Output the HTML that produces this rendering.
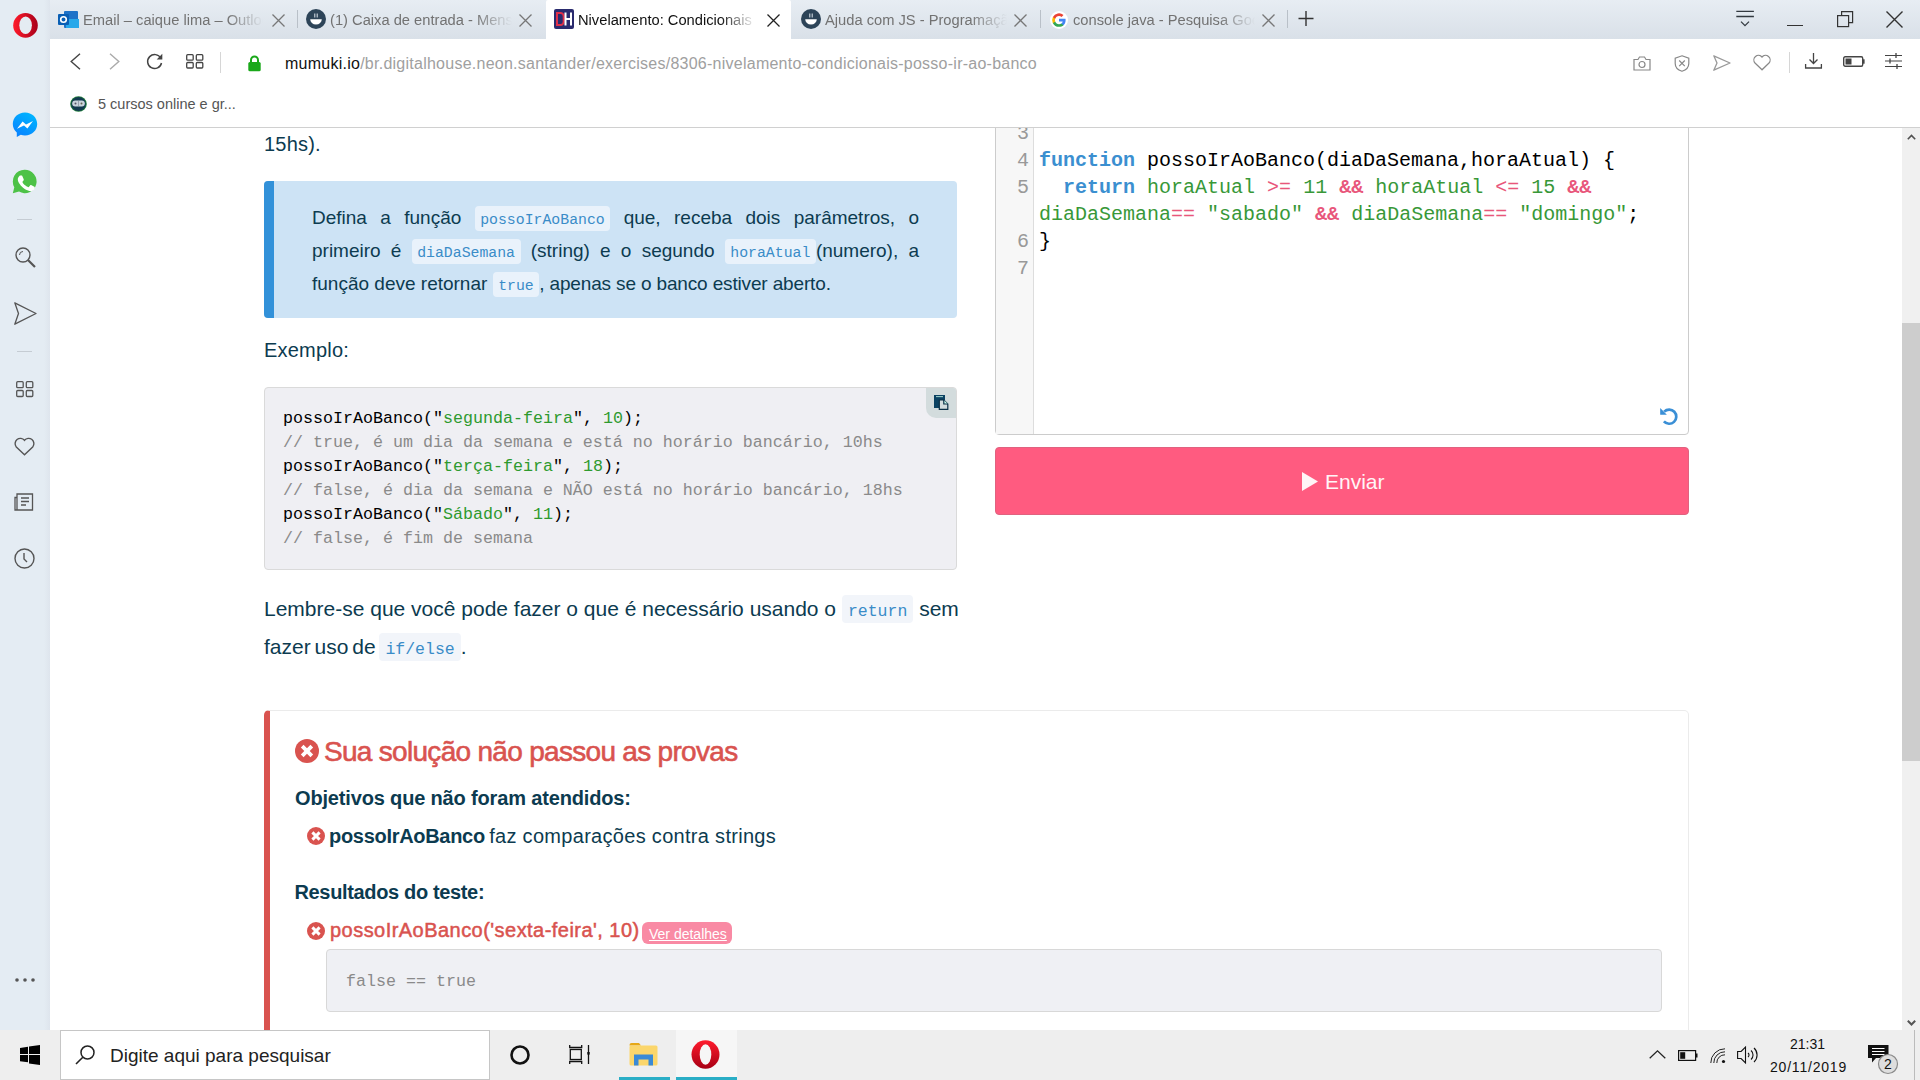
<!DOCTYPE html>
<html><head><meta charset="utf-8">
<style>
*{margin:0;padding:0;box-sizing:border-box}
html,body{width:1920px;height:1080px;overflow:hidden;background:#fff;font-family:"Liberation Sans",sans-serif}
.a{position:absolute}
.nw{white-space:nowrap}
svg{position:absolute;overflow:visible}
#tabstrip{left:0;top:0;width:1920px;height:39px;background:linear-gradient(#e7edf3,#d9e0e8)}
#sidebar{left:0;top:0;width:50px;height:1030px;background:linear-gradient(to right,#e4ecf3 88%,#dee5ed)}
#chrome{left:50px;top:39px;width:1870px;height:89px;background:#fff;border-bottom:1px solid #d0d0d0;border-top-left-radius:4px}
#page{left:0;top:0;width:1902px;height:1030px;clip-path:inset(128px 0 0 50px)}
#scroll{left:1902px;top:128px;width:18px;height:902px;background:#f0f0f0}
#taskbar{left:0;top:1030px;width:1920px;height:50px;background:#eeeeee}
.tabt{position:absolute;top:11.5px;font-size:14.7px;line-height:17px;color:#727272;white-space:nowrap;overflow:hidden;-webkit-mask-image:linear-gradient(to right,#000 80%,transparent)}
.tc{color:#777}
.txt{color:#0c3b50;white-space:nowrap}
.ic{display:inline-block;font-family:"Liberation Mono",monospace;color:#3a8cc8;background:#e9f2fb;border-radius:4px;vertical-align:baseline}
.codeblk{left:264px;top:387px;width:693px;height:183px;background:#efeff3;border:1px solid #dadada;border-radius:4px}
.cl{position:absolute;left:283px;font-family:"Liberation Mono",monospace;font-size:16.67px;line-height:20px;color:#000;white-space:pre}
.cm{color:#8a8a8a}.gs{color:#2e9a2e}
.editor{left:995px;top:100px;width:694px;height:335px;border:1px solid #cccccc;border-radius:4px;background:#fff}
.gutter{position:absolute;left:996px;top:128px;width:38px;height:306px;background:#f7f7f7;border-right:1px solid #dddddd}
.ln{position:absolute;left:996px;width:33px;text-align:right;font-family:"Liberation Mono",monospace;font-size:20px;line-height:23px;color:#999}
.el{position:absolute;left:1039px;font-family:"Liberation Mono",monospace;font-size:20px;line-height:23px;color:#000;white-space:pre}
.kw{color:#3b8fd0;font-weight:bold}.gr{color:#389838}.op{color:#e8567b}.opb{color:#e8567b;font-weight:bold}
.btn{left:995px;top:447px;width:694px;height:68px;background:#ff5b80;border:1px solid #e0627f;border-radius:4px}
.errbox{left:264px;top:710px;width:1425px;height:400px;border:1px solid #ebebeb;border-left:6px solid #d9534f;border-radius:5px}
</style></head>
<body>
<!-- ===== TAB STRIP ===== -->
<div id="tabstrip" class="a"></div>
<div class="a" style="left:546px;top:0;width:245px;height:39px;background:#fff;border-radius:2px 2px 0 0"></div>
<!-- tab1 outlook -->
<svg style="left:58px;top:10px" width="22" height="19" viewBox="0 0 22 19">
  <rect x="6" y="1" width="14" height="17" rx="1" fill="#1e72c8"/>
  <rect x="8" y="9" width="13" height="9" fill="#28a8ea"/>
  <rect x="0" y="4" width="11" height="11" rx="1" fill="#0a5fb4"/>
  <circle cx="5.5" cy="9.5" r="2.8" fill="none" stroke="#fff" stroke-width="1.6"/>
</svg>
<div class="tabt" style="left:83px;width:180px">Email – caique lima – Outlook</div>
<svg style="left:272px;top:14px" width="13" height="13"><path d="M0.5 0.5L12.5 12.5M12.5 0.5L0.5 12.5" stroke="#777" stroke-width="1.3"/></svg>
<div class="a" style="left:297px;top:10px;width:1px;height:18px;background:#b9c0c8"></div>
<!-- tab2 -->
<svg style="left:306px;top:9px" width="20" height="20" viewBox="0 0 20 20"><circle cx="10" cy="10" r="10" fill="#2d4458"/><path d="M4.2 10.2h11.6a5.8 5.2 0 0 1-11.6 0z" fill="#fff"/><path d="M8.8 4.5v4M11.2 4.5v4" stroke="#dfe6ee" stroke-width="1"/></svg>
<div class="tabt" style="left:330px;width:182px">(1) Caixa de entrada - Mensagens</div>
<svg style="left:519px;top:14px" width="13" height="13"><path d="M0.5 0.5L12.5 12.5M12.5 0.5L0.5 12.5" stroke="#777" stroke-width="1.3"/></svg>
<!-- tab3 active -->
<svg style="left:554px;top:9px" width="20" height="20" viewBox="0 0 20 20"><rect width="20" height="20" rx="2" fill="#2a2b6e"/><path d="M3 4h3.5a3.2 3.2 0 0 1 3.2 3.2v5.6a3.2 3.2 0 0 1-3.2 3.2H3z" fill="none" stroke="#e0304a" stroke-width="2"/><path d="M11.5 3.5v13M17 3.5v13M11.5 10H17" stroke="#fff" stroke-width="2"/></svg>
<div class="tabt" style="left:578px;width:178px;color:#111">Nivelamento: Condicionais</div>
<svg style="left:767px;top:14px" width="13" height="13"><path d="M0.5 0.5L12.5 12.5M12.5 0.5L0.5 12.5" stroke="#222" stroke-width="1.3"/></svg>
<!-- tab4 -->
<svg style="left:801px;top:9px" width="20" height="20" viewBox="0 0 20 20"><circle cx="10" cy="10" r="10" fill="#2d4458"/><path d="M4.2 10.2h11.6a5.8 5.2 0 0 1-11.6 0z" fill="#fff"/><path d="M8.8 4.5v4M11.2 4.5v4" stroke="#dfe6ee" stroke-width="1"/></svg>
<div class="tabt" style="left:825px;width:182px">Ajuda com JS - Programação</div>
<svg style="left:1014px;top:14px" width="13" height="13"><path d="M0.5 0.5L12.5 12.5M12.5 0.5L0.5 12.5" stroke="#777" stroke-width="1.3"/></svg>
<div class="a" style="left:1040px;top:10px;width:1px;height:18px;background:#b9c0c8"></div>
<!-- tab5 google -->
<svg style="left:1050px;top:11px" width="18" height="18" viewBox="0 0 18 18"><circle cx="9" cy="9" r="9" fill="#fff"/>
 <path d="M15.6 9.2c0-.5 0-1-.1-1.4H9v2.7h3.7a3.2 3.2 0 0 1-1.4 2.1v1.7h2.2c1.3-1.2 2.1-3 2.1-5.1z" fill="#4285f4"/>
 <path d="M9 15.8c1.8 0 3.4-.6 4.5-1.6l-2.2-1.7c-.6.4-1.4.7-2.3.7-1.8 0-3.3-1.2-3.8-2.8H2.9v1.8A6.8 6.8 0 0 0 9 15.8z" fill="#34a853"/>
 <path d="M5.2 10.4a4 4 0 0 1 0-2.6V6H2.9a6.8 6.8 0 0 0 0 6.2z" fill="#fbbc05"/>
 <path d="M9 4.9c1 0 1.9.3 2.6 1l1.9-1.9A6.8 6.8 0 0 0 2.9 6l2.3 1.8C5.7 6.1 7.2 4.9 9 4.9z" fill="#ea4335"/></svg>
<div class="tabt" style="left:1073px;width:182px">console java - Pesquisa Google</div>
<svg style="left:1262px;top:14px" width="13" height="13"><path d="M0.5 0.5L12.5 12.5M12.5 0.5L0.5 12.5" stroke="#777" stroke-width="1.3"/></svg>
<div class="a" style="left:1287px;top:10px;width:1px;height:18px;background:#b9c0c8"></div>
<svg style="left:1298px;top:11px" width="16" height="16"><path d="M8 0v15M0.5 7.5h15" stroke="#333" stroke-width="1.4"/></svg>
<!-- window controls -->
<svg style="left:1736px;top:10px" width="19" height="17"><path d="M0.3 1.4h17.6M0.3 6.5h17.6" stroke="#333a40" stroke-width="1.3"/><path d="M5 11.6l4 4 4-4" fill="none" stroke="#333a40" stroke-width="1.3"/></svg>
<div class="a" style="left:1787px;top:25px;width:16px;height:1.3px;background:#333"></div>
<svg style="left:1837px;top:11px" width="17" height="16"><rect x="0.6" y="4.6" width="11" height="11" fill="none" stroke="#333" stroke-width="1.2"/><path d="M4.6 4.6V0.6h11v11h-4" fill="none" stroke="#333" stroke-width="1.2"/></svg>
<svg style="left:1886px;top:11px" width="17" height="17"><path d="M0.5 0.5L16.5 16.5M16.5 0.5L0.5 16.5" stroke="#333" stroke-width="1.4"/></svg>

<!-- ===== SIDEBAR ===== -->
<div id="sidebar" class="a"></div>
<svg style="left:13px;top:13px" width="25" height="25" viewBox="0 0 25 25"><defs><linearGradient id="ol" x1="0" y1="0" x2="1" y2="0"><stop offset="0" stop-color="#ff1a2a"/><stop offset="1" stop-color="#a8001a"/></linearGradient></defs>
  <ellipse cx="12.5" cy="12.4" rx="12.3" ry="12.3" fill="url(#ol)"/>
  <ellipse cx="12.6" cy="12.3" rx="6.3" ry="8.8" fill="#e4ecf2"/>
</svg>


<!-- sidebar icons -->
<svg style="left:12px;top:112px" width="26" height="26" viewBox="0 0 26 26"><defs><linearGradient id="msg" x1="0" y1="1" x2="0.6" y2="0"><stop offset="0" stop-color="#0a7cff"/><stop offset="1" stop-color="#00b2ff"/></linearGradient></defs><path d="M13 0.5C6 0.5 0.8 5.5 0.8 12c0 3.5 1.5 6.5 4 8.6V25l4-2.2c1.3.4 2.7.6 4.2.6 7 0 12.2-5 12.2-11.4S20 0.5 13 0.5z" fill="url(#msg)"/><path d="M5 16.8L10.6 9.6 14 12.4 21 9 15.4 16.4 12 13.6z" fill="#fff"/></svg>
<svg style="left:12px;top:169px" width="25" height="25" viewBox="0 0 25 25"><path d="M12.5 0.8A11.7 11.7 0 0 0 2.3 18.2L0.8 24.2l6.2-1.6A11.7 11.7 0 1 0 12.5 0.8z" fill="#4dc247"/><path d="M8.6 6.5c-.4 0-1 .1-1.4.7-.5.5-1.4 1.4-1.4 3.4s1.5 4 1.7 4.2c.2.3 2.9 4.6 7.1 6.2 3.5 1.4 4.2 1.1 5 1 .8-.1 2.5-1 2.8-2 .4-1 .4-1.8.3-2-.1-.2-.4-.3-.8-.5l-2.8-1.4c-.4-.1-.7-.2-.9.2-.3.4-1.1 1.4-1.3 1.6-.2.3-.5.3-.9.1-.4-.2-1.7-.6-3.3-2-1.2-1.1-2-2.4-2.2-2.8-.2-.4 0-.6.2-.8l.6-.7c.2-.2.3-.4.4-.7.1-.3 0-.5 0-.7l-1.3-3c-.3-.8-.7-.7-.9-.7z" fill="#fff"/></svg>
<div class="a" style="left:17px;top:219px;width:15px;height:1px;background:#c5ccd3"></div>
<svg style="left:15px;top:247px" width="21" height="21" viewBox="0 0 21 21"><circle cx="8" cy="8" r="7" fill="none" stroke="#555" stroke-width="1.4"/><path d="M13 13l7 7" stroke="#555" stroke-width="2.2"/><path d="M4.5 8a3.5 3.5 0 0 1 3.5-3.5" fill="none" stroke="#555" stroke-width="1"/></svg>
<svg style="left:14px;top:302px" width="23" height="23" viewBox="0 0 23 23"><path d="M0.8 0.8L22 11.5 0.8 22.2 4.5 11.5z" fill="none" stroke="#555" stroke-width="1.3" stroke-linejoin="round"/></svg>
<div class="a" style="left:17px;top:351px;width:15px;height:1px;background:#c5ccd3"></div>
<svg style="left:16px;top:381px" width="18" height="17"><rect x="0.7" y="0.7" width="6.5" height="6" rx="1" fill="none" stroke="#555" stroke-width="1.3"/><rect x="10.3" y="0.7" width="6.5" height="6" rx="1" fill="none" stroke="#555" stroke-width="1.3"/><rect x="0.7" y="9.5" width="6.5" height="6" rx="1" fill="none" stroke="#555" stroke-width="1.3"/><rect x="10.3" y="9.5" width="6.5" height="6" rx="1" fill="none" stroke="#555" stroke-width="1.3"/></svg>
<svg style="left:14px;top:437px" width="21" height="19" viewBox="0 0 21 19"><path d="M10.5 17.8L2.3 10A4.9 4.9 0 0 1 10.5 3.3 4.9 4.9 0 0 1 18.7 10z" fill="none" stroke="#555" stroke-width="1.4"/></svg>
<svg style="left:14px;top:493px" width="21" height="18" viewBox="0 0 21 18"><path d="M3 4.5h-2v12.5h17.5V1H3v16" fill="none" stroke="#555" stroke-width="1.3"/><path d="M7 5h8M7 8.5h8M7 12h5" stroke="#555" stroke-width="1.3"/></svg>
<svg style="left:14px;top:548px" width="21" height="21" viewBox="0 0 21 21"><circle cx="10.5" cy="10.5" r="9.5" fill="none" stroke="#555" stroke-width="1.4"/><path d="M10 5v6l3 3" fill="none" stroke="#555" stroke-width="1.4"/></svg>
<svg style="left:15px;top:978px" width="20" height="4"><circle cx="2" cy="2" r="1.8" fill="#555"/><circle cx="10" cy="2" r="1.8" fill="#555"/><circle cx="18" cy="2" r="1.8" fill="#555"/></svg>

<!-- ===== CHROME (address+bookmarks) ===== -->
<div id="chrome" class="a"></div>
<svg style="left:70px;top:53px" width="11" height="17"><path d="M10 0.7L1.2 8.5 10 16.3" fill="none" stroke="#444" stroke-width="1.4"/></svg>
<svg style="left:109px;top:53px" width="11" height="17"><path d="M1 0.7L9.8 8.5 1 16.3" fill="none" stroke="#aaa" stroke-width="1.4"/></svg>
<svg style="left:146px;top:53px" width="18" height="17" viewBox="0 0 18 17"><path d="M14.8 5.2A7 7 0 1 0 15.5 10" fill="none" stroke="#444" stroke-width="1.5"/><path d="M16.3 0.8v5.6h-5.6z" fill="#444"/></svg>
<svg style="left:186px;top:54px" width="18" height="15"><rect x="0.7" y="0.7" width="6.5" height="5.5" rx="1" fill="none" stroke="#444" stroke-width="1.3"/><rect x="10.3" y="0.7" width="6.5" height="5.5" rx="1" fill="none" stroke="#444" stroke-width="1.3"/><rect x="0.7" y="8.5" width="6.5" height="5.5" rx="1" fill="none" stroke="#444" stroke-width="1.3"/><rect x="10.3" y="8.5" width="6.5" height="5.5" rx="1" fill="none" stroke="#444" stroke-width="1.3"/></svg>
<div class="a" style="left:220px;top:52px;width:1px;height:21px;background:#d6d6d6"></div>
<svg style="left:247.5px;top:55px" width="13" height="17" viewBox="0 0 13 17"><path d="M3 7.5V5a3.5 3.5 0 0 1 7 0v2.5" fill="none" stroke="#1aa81a" stroke-width="2"/><rect x="0.3" y="7" width="12.4" height="9.3" rx="1.5" fill="#1aa81a"/></svg>
<div class="a nw" style="left:285px;top:54px;font-size:16px;line-height:19px;color:#111;letter-spacing:0.25px">mumuki.io<span style="color:#a0a0a0">/br.digitalhouse.neon.santander/exercises/8306-nivelamento-condicionais-posso-ir-ao-banco</span></div>
<!-- right icons -->
<svg style="left:1633px;top:55px" width="18" height="16" viewBox="0 0 18 16"><path d="M1 4.5h4l1.5-2.5h5L13 4.5h4v10.5H1z" fill="none" stroke="#888" stroke-width="1.2"/><circle cx="9" cy="9.5" r="3" fill="none" stroke="#888" stroke-width="1.2"/></svg>
<svg style="left:1674px;top:55px" width="16" height="17" viewBox="0 0 16 17"><path d="M8 0.8l6.8 2.4v5.3c0 3.8-3 6.6-6.8 7.8C4.2 15.1 1.2 12.3 1.2 8.5V3.2z" fill="none" stroke="#888" stroke-width="1.2"/><path d="M5.2 5.5l5.6 5.6M10.8 5.5l-5.6 5.6" stroke="#888" stroke-width="1.2"/></svg>
<svg style="left:1713px;top:55px" width="18" height="16" viewBox="0 0 18 16"><path d="M0.8 0.8L17 8 0.8 15.2 4 8z" fill="none" stroke="#999" stroke-width="1.3" stroke-linejoin="round"/></svg>
<svg style="left:1753px;top:54px" width="18" height="17" viewBox="0 0 18 17"><path d="M9 15.8L2 9A4.3 4.3 0 0 1 9 3a4.3 4.3 0 0 1 7 6z" fill="none" stroke="#888" stroke-width="1.2"/></svg>
<div class="a" style="left:1789px;top:52px;width:1px;height:21px;background:#d6d6d6"></div>
<svg style="left:1805px;top:53px" width="17" height="16" viewBox="0 0 17 16"><path d="M8.5 0v10M4.5 6.5l4 4 4-4" fill="none" stroke="#444" stroke-width="1.3"/><path d="M0.6 11v4h15.8v-4" fill="none" stroke="#444" stroke-width="1.3"/></svg>
<svg style="left:1843px;top:56px" width="22" height="11" viewBox="0 0 22 11"><rect x="0.7" y="0.7" width="19" height="9.6" rx="1.5" fill="none" stroke="#444" stroke-width="1.4"/><rect x="2.5" y="2.5" width="6" height="6" fill="#444"/><rect x="20" y="3.3" width="1.6" height="4.4" fill="#444"/></svg>
<svg style="left:1885px;top:53px" width="18" height="16" viewBox="0 0 18 16"><path d="M0 2.5h17M0 8h17M0 13.5h17" stroke="#444" stroke-width="1.2"/><path d="M11 0v5M5 5.5v5M12 11v5" stroke="#444" stroke-width="1.3"/></svg>
<!-- bookmark -->
<svg style="left:70px;top:96px" width="17" height="16" viewBox="0 0 17 16"><ellipse cx="8.5" cy="8" rx="8.3" ry="7.8" fill="#1e7a3a"/><ellipse cx="8.5" cy="8" rx="7.3" ry="6.9" fill="#123a4f"/><rect x="2.2" y="4.5" width="12.6" height="6" rx="3" fill="#c9d3dc"/><circle cx="5.5" cy="7.5" r="1" fill="#556"/><circle cx="11.5" cy="7.5" r="1" fill="#665"/><path d="M8.5 5v5" stroke="#8a96a3" stroke-width="0.8"/></svg>
<div class="a nw" style="left:98px;top:95.5px;font-size:14.5px;line-height:17px;color:#555">5 cursos online e gr...</div>

<!-- ===== PAGE ===== -->
<div id="page" class="a">
  <div class="a txt" style="left:264px;top:133px;font-size:20px;line-height:23px;letter-spacing:0.2px">15hs).</div>
  <!-- callout -->
  <div class="a" style="left:264px;top:181px;width:693px;height:137px;background:#cde3f5;border-radius:4px"></div>
  <div class="a" style="left:264px;top:181px;width:10px;height:137px;background:#3291d9;border-radius:4px 0 0 4px"></div>
  <div class="a txt" style="left:312px;top:202.5px;width:607px;font-size:19px;line-height:30px;text-align:justify;text-align-last:justify">Defina a função <span class="ic" style="font-size:14.83px;line-height:22px;height:25px;padding:3px 5.5px 0">possoIrAoBanco</span> que, receba dois parâmetros, o</div>
  <div class="a txt" style="left:312px;top:236px;width:607px;font-size:19px;line-height:30px;text-align:justify;text-align-last:justify">primeiro é <span class="ic" style="font-size:14.83px;line-height:22px;height:25px;padding:3px 5.5px 0">diaDaSemana</span> (string) e o segundo <span class="ic" style="font-size:14.83px;line-height:22px;height:25px;padding:3px 5.5px 0">horaAtual</span>(numero), a</div>
  <div class="a txt" style="left:312px;top:269px;font-size:19px;line-height:30px">função deve retornar <span class="ic" style="font-size:14.83px;line-height:22px;height:25px;padding:3px 5.5px 0">true</span><span style="letter-spacing:-0.15px">, apenas se o banco estiver aberto.</span></div>

  <div class="a txt" style="left:264px;top:339px;font-size:20px;line-height:23px;letter-spacing:0.2px">Exemplo:</div>
  <!-- code block -->
  <div class="a codeblk"></div>
  <div class="a" style="left:926px;top:388px;width:30px;height:30px;background:#d3dcdd;border-radius:0 3px 0 10px"></div>
  <svg style="left:934px;top:395px" width="15" height="15" viewBox="0 0 15 15"><rect x="0" y="0" width="11" height="13" fill="#0b4262"/><rect x="2" y="1.3" width="7" height="0.8" fill="#cfe"/><path d="M5.3 5h4.5l4 4v5.4H5.3z" fill="#d3dcdd" stroke="#0b2f45" stroke-width="1.2"/><path d="M9.8 5v4h4" fill="#cfe" stroke="#0b2f45" stroke-width="1.2"/></svg>
  <div class="cl" style="top:409px">possoIrAoBanco("<span class="gs">segunda-feira</span>", <span class="gs">10</span>);</div>
  <div class="cl cm" style="top:433px">// true, é um dia da semana e está no horário bancário, 10hs</div>
  <div class="cl" style="top:457px">possoIrAoBanco("<span class="gs">terça-feira</span>", <span class="gs">18</span>);</div>
  <div class="cl cm" style="top:481px">// false, é dia da semana e NÃO está no horário bancário, 18hs</div>
  <div class="cl" style="top:505px">possoIrAoBanco("<span class="gs">Sábado</span>", <span class="gs">11</span>);</div>
  <div class="cl cm" style="top:529px">// false, é fim de semana</div>

  <div class="a txt" style="left:264px;top:593px;width:693px;font-size:21px;line-height:32px;text-align:justify;text-align-last:justify">Lembre-se que você pode fazer o que é necessário usando o <span class="ic" style="font-size:16.5px;line-height:22px;height:28px;padding:6px 6px 0;background:#f2f5fa">return</span> sem</div>
  <div class="a txt" style="left:264px;top:630.5px;font-size:21px;line-height:32px;word-spacing:-2px">fazer uso de <span class="ic" style="font-size:16.5px;line-height:22px;height:28px;padding:6px 6px 0;background:#f2f5fa">if/else</span>.</div>

  <!-- editor -->
  <div class="a editor"></div>
  <div class="gutter"></div>
  <div class="ln" style="top:122px">3</div>
  <div class="ln" style="top:149px">4</div>
  <div class="ln" style="top:176px">5</div>
  <div class="ln" style="top:230px">6</div>
  <div class="ln" style="top:257px">7</div>
  <div class="el" style="top:149px"><span class="kw">function</span> possoIrAoBanco(diaDaSemana,horaAtual) {</div>
  <div class="el" style="top:176px">  <span class="kw">return</span> <span class="gr">horaAtual</span> <span class="op">&gt;=</span> <span class="gr">11</span> <span class="opb">&amp;&amp;</span> <span class="gr">horaAtual</span> <span class="op">&lt;=</span> <span class="gr">15</span> <span class="opb">&amp;&amp;</span></div>
  <div class="el" style="top:203px"><span class="gr">diaDaSemana</span><span class="op">==</span> <span class="gr">"sabado"</span> <span class="opb">&amp;&amp;</span> <span class="gr">diaDaSemana</span><span class="op">==</span> <span class="gr">"domingo"</span>;</div>
  <div class="el" style="top:230px">}</div>
  <svg style="left:1655px;top:402px" width="28" height="28" viewBox="0 0 28 28"><path d="M9.2 9.6A7.1 7.1 0 1 1 8.9 19.4" fill="none" stroke="#3a8fd6" stroke-width="2.7"/><path d="M5.2 6L5.2 12.7 11.9 12.7z" fill="#3a8fd6"/></svg>
  <!-- button -->
  <div class="a btn"></div>
  <svg style="left:1302px;top:472px" width="16" height="19"><path d="M0 0L16 9.5 0 19z" fill="#fff5f7"/></svg>
  <div class="a nw" style="left:1325px;top:470px;font-size:21px;line-height:23px;color:#fff5f7">Enviar</div>

  <!-- error box -->
  <div class="a errbox"></div>
  <svg style="left:295px;top:739px" width="24" height="24" viewBox="0 0 24 24"><circle cx="12" cy="12" r="12" fill="#d9534f"/><path d="M7.2 7.2l9.6 9.6M16.8 7.2l-9.6 9.6" stroke="#fff" stroke-width="3.8"/></svg>
  <div class="a nw" style="left:324px;top:736px;font-size:28px;line-height:31px;color:#d9534f;letter-spacing:-0.7px;-webkit-text-stroke:0.6px #d9534f">Sua solução não passou as provas</div>
  <div class="a nw" style="left:295px;top:787px;font-size:20px;line-height:23px;color:#0c3b50;font-weight:bold;letter-spacing:-0.16px">Objetivos que não foram atendidos:</div>
  <svg style="left:307px;top:827px" width="18" height="18" viewBox="0 0 18 18"><circle cx="9" cy="9" r="9" fill="#d9534f"/><path d="M5.4 5.4l7.2 7.2M12.6 5.4l-7.2 7.2" stroke="#fff" stroke-width="2.9"/></svg>
  <div class="a nw" style="left:329px;top:825px;font-size:20px;line-height:23px;color:#0c3b50"><b style="letter-spacing:-0.3px">possoIrAoBanco</b><span style="letter-spacing:0.3px;margin-left:-1.5px"> faz comparações contra strings</span></div>
  <div class="a nw" style="left:294.5px;top:881px;font-size:20px;line-height:23px;color:#0c3b50;font-weight:bold;letter-spacing:-0.35px">Resultados do teste:</div>
  <svg style="left:307px;top:922px" width="18" height="18" viewBox="0 0 18 18"><circle cx="9" cy="9" r="9" fill="#d9534f"/><path d="M5.4 5.4l7.2 7.2M12.6 5.4l-7.2 7.2" stroke="#fff" stroke-width="2.9"/></svg>
  <div class="a nw" style="left:330px;top:919px;font-size:20px;line-height:23px;color:#d9534f;letter-spacing:0.46px;-webkit-text-stroke:0.5px #d9534f">possoIrAoBanco('sexta-feira', 10)</div>
  <div class="a" style="left:642px;top:922px;width:90px;height:22px;background:#f98aa4;border-radius:6px"></div>
  <div class="a nw" style="left:649px;top:926px;font-size:14px;line-height:16px;color:#fff;text-decoration:underline">Ver detalhes</div>
  <div class="a" style="left:326px;top:949px;width:1336px;height:63px;background:#eff0f4;border:1px solid #d8d8d8;border-radius:4px"></div>
  <div class="cl cm" style="left:346px;top:972px">false == true</div>
</div>

<!-- ===== SCROLLBAR ===== -->
<div id="scroll" class="a"></div>
<div class="a" style="left:1902px;top:323px;width:18px;height:438px;background:#cdcdcd"></div>
<svg style="left:1907px;top:134px" width="9" height="6"><path d="M0.8 5.2L4.5 1.5 8.2 5.2" fill="none" stroke="#505050" stroke-width="1.6"/></svg>
<svg style="left:1907px;top:1020px" width="9" height="6"><path d="M0.8 0.8L4.5 4.5 8.2 0.8" fill="none" stroke="#555" stroke-width="2"/></svg>

<!-- ===== TASKBAR ===== -->
<div id="taskbar" class="a"></div>
<!-- taskbar items -->
<svg style="left:20px;top:1045px" width="20" height="20" viewBox="0 0 20 20"><path d="M0 3L8 1.8V9H0zM9 1.6L20 0v9H9zM0 10h8v7.2L0 16.2zM9 10H20v10L9 18.4z" fill="#000"/></svg>
<div class="a" style="left:60px;top:1030px;width:430px;height:50px;background:#fff;border:1px solid #c6c6c6"></div>
<svg style="left:75px;top:1045px" width="20" height="20" viewBox="0 0 20 20"><circle cx="12.5" cy="7.5" r="6.5" fill="none" stroke="#222" stroke-width="1.5"/><path d="M7.8 12.2L1 19" stroke="#222" stroke-width="1.6"/></svg>
<div class="a nw" style="left:110px;top:1045px;font-size:19px;line-height:22px;color:#222">Digite aqui para pesquisar</div>
<svg style="left:510px;top:1045px" width="20" height="20" viewBox="0 0 20 20"><circle cx="10" cy="10" r="8.5" fill="none" stroke="#111" stroke-width="2.6"/></svg>
<svg style="left:569px;top:1045px" width="22" height="19" viewBox="0 0 22 19"><path d="M0.7 0v2.5h12V0M0.7 19v-2.5h12V19" fill="none" stroke="#111" stroke-width="1.3"/><rect x="1.3" y="4.5" width="11" height="10" fill="none" stroke="#111" stroke-width="1.3"/><path d="M19.5 0v19" stroke="#111" stroke-width="1.3"/><rect x="18.3" y="7" width="2.4" height="2.6" fill="#111"/></svg>
<div class="a" style="left:619px;top:1077px;width:51px;height:3px;background:#2aaec6"></div>
<svg style="left:629px;top:1043px" width="29" height="23" viewBox="0 0 29 23"><path d="M0.5 2a2 2 0 0 1 2-2H10l2 2.5h-11.5z" fill="#e6a817"/><rect x="0.5" y="2.5" width="28" height="20" rx="1.5" fill="#fbd66b"/><path d="M5 22.5v-11h19v11h-4.5v-6h-10v6z" fill="#3a8ad6"/></svg>
<div class="a" style="left:676px;top:1030px;width:61px;height:50px;background:#f6f6f6"></div>
<div class="a" style="left:676px;top:1077px;width:61px;height:3px;background:#2aaec6"></div>
<svg style="left:691px;top:1040px" width="29" height="29" viewBox="0 0 29 29"><defs><linearGradient id="og" x1="0" y1="0" x2="0" y2="1"><stop offset="0" stop-color="#ff1b2d"/><stop offset="1" stop-color="#a70014"/></linearGradient></defs><ellipse cx="14.5" cy="14.5" rx="14" ry="14.3" fill="url(#og)"/><ellipse cx="14.5" cy="14.5" rx="5.8" ry="10.2" fill="#f6f6f6"/></svg>
<!-- tray -->
<svg style="left:1649px;top:1050px" width="17" height="9"><path d="M0.7 8.3L8.5 0.9 16.3 8.3" fill="none" stroke="#222" stroke-width="1.3"/></svg>
<svg style="left:1678px;top:1050px" width="20" height="11" viewBox="0 0 20 11"><rect x="0.6" y="0.6" width="17" height="9.8" fill="none" stroke="#111" stroke-width="1.2"/><rect x="2.2" y="2.2" width="5" height="6.6" fill="#111"/><rect x="18" y="3.5" width="1.5" height="4" fill="#111"/></svg>
<svg style="left:1710px;top:1048px" width="16" height="16" viewBox="0 0 16 16"><path d="M0.8 15A14 14 0 0 1 15 0.8M3.8 15A11 11 0 0 1 15 3.8M6.8 15A8 8 0 0 1 15 6.8" fill="none" stroke="#222" stroke-width="1"/><circle cx="13.5" cy="13.5" r="1.6" fill="#111"/></svg>
<svg style="left:1737px;top:1046px" width="21" height="18" viewBox="0 0 21 18"><path d="M0.6 5.5h3.5L8.5 1v16l-4.4-4.5H0.6z" fill="none" stroke="#111" stroke-width="1.1"/><path d="M11 7a2.5 2.5 0 0 1 0 4M14 4.5a6 6 0 0 1 0 9M17 2a9.5 9.5 0 0 1 0 14" fill="none" stroke="#111" stroke-width="1.1"/></svg>
<div class="a nw" style="left:1790px;top:1036px;font-size:14px;line-height:16px;color:#111">21:31</div>
<div class="a nw" style="left:1770px;top:1059px;font-size:14px;line-height:16px;color:#111;letter-spacing:0.8px">20/11/2019</div>
<svg style="left:1868px;top:1045px" width="21" height="18" viewBox="0 0 21 18"><path d="M0 0h20.5v13H8l-4 4.5V13H0z" fill="#111"/><path d="M4 3.5h12.5M4 6.5h12.5M4 9.5h12.5" stroke="#fff" stroke-width="1"/></svg>
<svg style="left:1878px;top:1054px" width="20" height="20" viewBox="0 0 20 20"><circle cx="10" cy="10" r="9.5" fill="#dedede" stroke="#8a8a8a" stroke-width="1.2"/><text x="10" y="15" text-anchor="middle" font-family="Liberation Sans" font-size="14" fill="#111">2</text></svg>
<div class="a" style="left:1914px;top:1030px;width:1px;height:50px;background:#bbb"></div>

</body></html>
